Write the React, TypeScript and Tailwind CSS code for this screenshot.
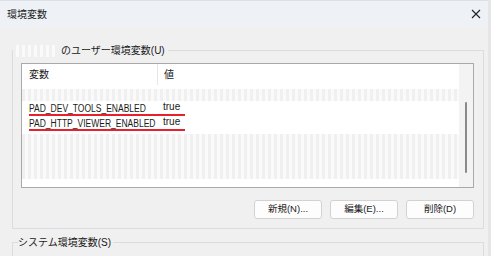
import { FC } from "react"

const mosaic =
  "bg-[repeating-linear-gradient(90deg,#f0f0f0_0px,#f0f0f0_3px,#fafafa_3px,#fafafa_6px)]"

const Row: FC<{ name: string; value: string }> = ({ name, value }) => (
  <div className="flex h-[15px] pl-[7px]">
    <div className="flex h-[15px] w-[156px] items-start border-b-2 border-[#e8202a] leading-[12px]">
      <span className="w-[134px] whitespace-nowrap">
        <span className="inline-block origin-left scale-x-[0.85] text-[10px] leading-[12px] text-[#1a1a1a]">
          {name}
        </span>
      </span>
      <span className="text-[10px] leading-[12px] text-[#1a1a1a]">{value}</span>
    </div>
  </div>
)

const DialogButton: FC<{ label: string }> = ({ label }) => (
  <button
    type="button"
    className="flex h-[19px] w-[68px] items-center justify-center rounded-[3px] border border-[#d2d2d2] bg-[#fdfdfd] text-[9.5px] text-[#1a1a1a]"
  >
    {label}
  </button>
)

const App: FC = () => {
  return (
    <div
      className="relative flex h-[256px] w-[491px] flex-col overflow-hidden border-r-[3px] border-[#e6e6e6] bg-[#f0f0f0]"
      style={{ fontFamily: '"Liberation Sans", "Noto Sans CJK JP", sans-serif' }}
    >
      {/* title bar */}
      <div className="flex h-[27px] shrink-0 items-center justify-between border-t border-[#dcdfe4] bg-[#eef2f7] pl-[7px] pr-[6px]">
        <span className="text-[10px] text-[#1a1a1a]">環境変数</span>
        <svg width="10" height="10" viewBox="0 0 10 10" className="mr-[1px]">
          <path d="M1 1L9 9M9 1L1 9" stroke="#222" strokeWidth="1.1" />
        </svg>
      </div>

      <div className="flex flex-col px-[12px] pt-[23px]">
        {/* user variables group */}
        <div className="relative h-[179px] w-[472px] border border-[#dcdcdc]">
          <div className="absolute -top-[7px] left-0 flex items-center bg-[#f0f0f0] pr-[3px]">
            <span className={`h-[12px] w-[44px] ${mosaic}`} />
            <span className="pl-[4px] text-[10px] leading-[13px] text-[#1a1a1a]">のユーザー環境変数(U)</span>
          </div>

          <div className="ml-[8px] mt-[12px] flex h-[125px] w-[453px] border border-[#a9a9a9] bg-white">
            <div className="flex flex-1 flex-col">
              <div className="flex h-[21px] items-center">
                <span className="w-[135px] pl-[7px] text-[10px] text-[#1a1a1a]">変数</span>
                <span className="h-[21px] border-l border-[#e6e6e6]" />
                <span className="pl-[6px] text-[10px] text-[#1a1a1a]">値</span>
              </div>
              <div className={`mt-[4px] h-[12px] ${mosaic}`} />
              <Row name="PAD_DEV_TOOLS_ENABLED" value="true" />
              <Row name="PAD_HTTP_VIEWER_ENABLED" value="true" />
              <div className={`mt-[3px] h-[45px] ${mosaic}`} />
            </div>
            <div className="flex w-[14px] justify-center bg-[#f3f3f3] pt-[38px]">
              <div className="h-[71px] w-[2px] rounded-full bg-[#8a8a8a]" />
            </div>
          </div>

          <div className="mt-[12px] flex justify-end gap-[8px] pr-[9px]">
            <DialogButton label="新規(N)..." />
            <DialogButton label="編集(E)..." />
            <DialogButton label="削除(D)" />
          </div>
        </div>

        {/* system variables group */}
        <div className="relative mt-[13px] h-[20px] w-[472px] border-x border-t border-[#dcdcdc]">
          <span className="absolute -top-[7px] left-[5px] bg-[#f0f0f0] pr-[2px] text-[10px] leading-[13px] text-[#1a1a1a]">
            システム環境変数(S)
          </span>
        </div>
      </div>
    </div>
  )
}

export default App
